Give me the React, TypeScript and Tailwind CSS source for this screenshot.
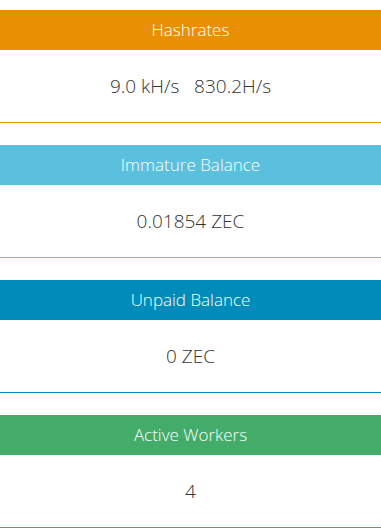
import React from 'react';

/**
 * Miner stats panels (hashrate, balances, workers)
 */

interface StatPanelProps {
  title: string;
  value: string;
  headerClass: string;
  borderClass: string;
}

const StatPanel: React.FC<StatPanelProps> = ({ title, value, headerClass, borderClass }) => {
  return (
    <div className="w-full">
      {/* Heading */}
      <div className={`h-10 flex items-center justify-center text-white text-[17px] font-light ${headerClass}`}>
        {title}
      </div>

      {/* Body */}
      <div className={`h-[73px] flex items-center justify-center border-b bg-white text-[#333] text-[19px] font-light ${borderClass}`}>
        {value}
      </div>
    </div>
  );
};

const panels: StatPanelProps[] = [
  {
    title: 'Hashrates',
    value: '9.0 kH/s \u00a0 830.2H/s',
    headerClass: 'bg-[#e99002]',
    borderClass: 'border-[#e99002]',
  },
  {
    title: 'Immature Balance',
    value: '0.01854 ZEC',
    headerClass: 'bg-[#5bc0de]',
    borderClass: 'border-[#5bc0de]',
  },
  {
    title: 'Unpaid Balance',
    value: '0 ZEC',
    headerClass: 'bg-[#008cba]',
    borderClass: 'border-[#008cba]',
  },
  {
    title: 'Active Workers',
    value: '4',
    headerClass: 'bg-[#43ac6a]',
    borderClass: 'border-[#43ac6a]',
  },
];

export default function App() {
  return (
    <div
      className="w-[381px] h-[528px] overflow-hidden bg-white pt-[10px] flex flex-col gap-[22px]"
      style={{ fontFamily: '"Open Sans", "Liberation Sans", sans-serif' }}
    >
      {panels.map((p) => (
        <StatPanel key={p.title} {...p} />
      ))}
    </div>
  );
}
